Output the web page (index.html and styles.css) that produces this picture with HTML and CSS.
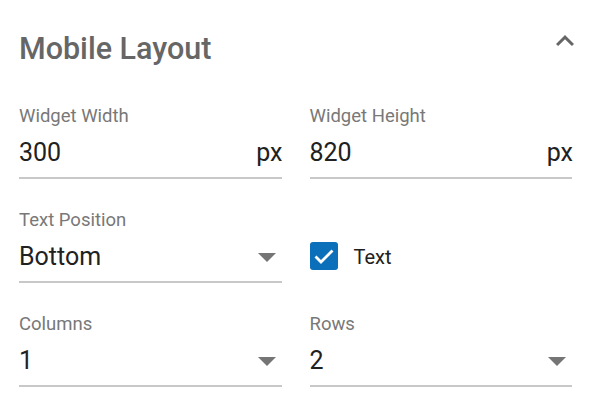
FILE: index.html
```html
<!DOCTYPE html>
<html lang="en">
<head>
<meta charset="utf-8">
<title>Mobile Layout</title>
<link rel="stylesheet" href="styles.css">
</head>
<body>
<div class="panel">
  <div class="header">
    <h2 class="title">Mobile Layout</h2>
    <svg class="chevron" viewBox="0 0 24 24" width="36" height="36"><path d="M12 8l-6 6 1.41 1.41L12 10.83l4.59 4.58L18 14z"/></svg>
  </div>
  <div class="grid">
    <div class="field">
      <div class="label">Widget Width</div>
      <div class="control"><span class="value">300</span><span class="unit">px</span></div>
    </div>
    <div class="field">
      <div class="label">Widget Height</div>
      <div class="control"><span class="value">820</span><span class="unit">px</span></div>
    </div>
    <div class="field">
      <div class="label">Text Position</div>
      <div class="control"><span class="value">Bottom</span><svg class="arrow" viewBox="0 0 18 9" width="18" height="9"><path d="M0 0h18L9 9z"/></svg></div>
    </div>
    <div class="check-field">
      <span class="checkbox"><svg viewBox="0 0 28 28" width="28" height="28"><polyline points="5.5,14.5 11,20 22.5,8.5"/></svg></span>
      <span class="check-label">Text</span>
    </div>
    <div class="field">
      <div class="label">Columns</div>
      <div class="control"><span class="value">1</span><svg class="arrow" viewBox="0 0 18 9" width="18" height="9"><path d="M0 0h18L9 9z"/></svg></div>
    </div>
    <div class="field">
      <div class="label">Rows</div>
      <div class="control"><span class="value">2</span><svg class="arrow" viewBox="0 0 18 9" width="18" height="9"><path d="M0 0h18L9 9z"/></svg></div>
    </div>
  </div>
</div>
</body>
</html>
```
FILE: styles.css
```css
html, body {
  margin: 0;
  padding: 0;
  background: #ffffff;
}
body {
  font-family: Roboto, "Noto Sans", Arial, sans-serif;
}
.panel {
  padding: 23px 20px 0 19px;
}
.header {
  display: flex;
  justify-content: space-between;
  align-items: flex-start;
}
.title {
  margin: 10px 0 0 0;
  font-size: 30.5px;
  line-height: 32px;
  font-weight: 500;
  color: #666666;
}
.chevron {
  fill: #666666;
  margin-right: -11px;
}
.grid {
  display: grid;
  grid-template-columns: 1fr 1fr;
  column-gap: 28px;
  row-gap: 30px;
  margin-top: 40px;
}
.label {
  font-size: 18.5px;
  line-height: 20px;
  padding-top: 1px;
  color: #787878;
  margin-bottom: 11px;
}
.control {
  display: flex;
  justify-content: space-between;
  align-items: center;
  height: 32px;
  padding-bottom: 8px;
  border-bottom: 2px solid #c8c8c8;
}
.value, .unit {
  font-size: 25px;
  line-height: 32px;
  color: #212121;
}
.unit {
  margin-right: -1px;
}
.arrow {
  fill: #757575;
  margin-right: 6px;
}
.check-field {
  display: flex;
  align-items: center;
  gap: 16px;
  padding-top: 31px;
  align-self: start;
}
.checkbox {
  display: block;
  width: 28px;
  height: 28px;
  border-radius: 3px;
  background: #0b6fba;
}
.checkbox svg {
  display: block;
}
.checkbox polyline {
  fill: none;
  stroke: #ffffff;
  stroke-width: 2.8;
}
.check-label {
  font-size: 20px;
  line-height: 28px;
  padding-top: 3px;
  color: #212121;
}
```
